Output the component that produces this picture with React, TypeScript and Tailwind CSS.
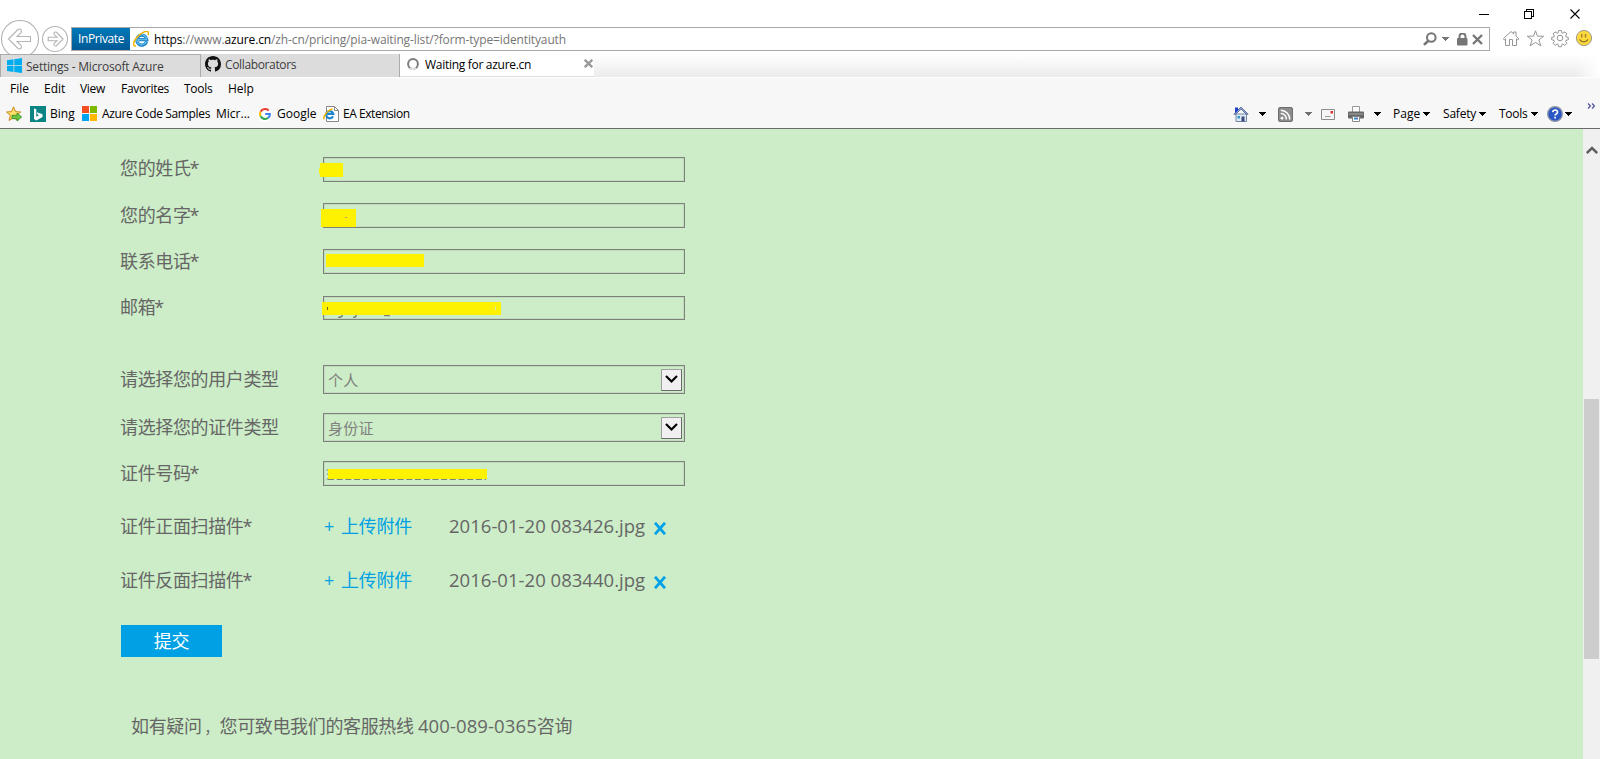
import type { ReactNode } from "react";

const cjk = "font-['Open_Sans','Noto_Sans_CJK_SC',sans-serif] font-normal text-[18px] leading-[24px] tracking-[-0.36px] whitespace-pre";

function Caret({ className = "text-black" }: { className?: string }) {
  return (
    <svg width="7" height="4" viewBox="0 0 7 4" className={`shrink-0 ${className}`} shapeRendering="crispEdges">
      <path d="M0 0h7L3.5 4z" fill="currentColor" />
    </svg>
  );
}

function EdgeE({ size, className = "" }: { size: number; className?: string }) {
  return (
    <svg width={size} height={size} viewBox="0 0 16 16" className={`shrink-0 ${className}`}>
      <path d="M13.6 10.6A5 5 0 1 1 13.8 8.6H6" fill="none" stroke="#1a80c4" strokeWidth="3.2" />
      <path d="M13.2 10.6A5 5 0 1 1 13.6 8.4H6" fill="none" stroke="#5cb8ec" strokeWidth="1.5" />
      <path d="M3 15C-.6 15.6 0 11 3.6 6.800C7.500 2 13.500-.9 15.200 1c.7.9.4 2-.2 3.200" fill="none" stroke="#f0b400" strokeWidth="1.5" />
    </svg>
  );
}

function NavButtons() {
  return (
    <svg width="71" height="34" viewBox="0 20 71 34" className="shrink-0" fill="none" stroke="#b4b4b4" strokeWidth="1.1">
      <circle cx="20" cy="39" r="18.500" fill="#fff" />
      <circle cx="55" cy="39" r="12.500" fill="#fff" />
      <path d="M8.500 39 18 29.500q2-1.200 3.200.6.700 1.400-.4 2.700L17 36.500h13.500v5H17l3.800 3.700q1.100 1.300.4 2.700-1.200 1.800-3.200.6z" />
      <path d="M63 39 56.500 32.300q-1.600-.8-2.500.5-.4 1 .3 1.800l2.700 2.600h-8.800v3.600H57l-2.700 2.600q-.7.8-.3 1.800.9 1.300 2.500.5z" />
    </svg>
  );
}

function WindowControls() {
  return (
    <div className="flex h-5 justify-end pr-[9px]">
      <svg width="112" height="20" viewBox="1479 0 112 20" fill="none" stroke="#000">
        <path d="M1479 14.500h10M1524.500 11.500h7v7h-7zM1526.500 11.500v-2h7v7h-2" shapeRendering="crispEdges" />
        <path d="M1570.500 9.500l9 9M1579.500 9.500l-9 9" strokeWidth="1.100" />
      </svg>
    </div>
  );
}

function AddressBar() {
  return (
    <div className="mt-[7px] flex h-[24px] w-[1419px] shrink-0 items-center border border-[#a9a9a9] bg-white">
      <div className="flex h-[22px] w-[58px] items-center bg-gradient-to-b from-[#0078b8] to-[#005a96] pl-[6px] font-['Open_Sans',sans-serif] text-[12px] leading-[16px] tracking-[-0.39px] text-white">
        InPrivate
      </div>
      <EdgeE size={16} className="ml-[3px]" />
      <div className="ml-[5px] mt-[2px] flex-1 whitespace-pre font-['Open_Sans',sans-serif] text-[12px] leading-[16px] tracking-[-0.124px] text-[#767676]">
        <span className="text-black">https</span>://www.<span className="text-black">azure.cn</span>/zh-cn/pricing/pia-waiting-list/?form-type=identityauth
      </div>
      <div className="flex items-center pr-[5px] text-[#767676]">
        <svg width="14" height="14" viewBox="0 0 14 14" fill="none" stroke="currentColor" strokeWidth="2">
          <circle cx="8.300" cy="5.500" r="4.300" />
          <path d="M5.300 8.700 1 12.900" strokeWidth="2.600" />
        </svg>
        <Caret className="ml-[5px] text-[#767676]" />
        <svg width="11" height="13" viewBox="0 0 11 13" className="ml-2 mr-px" fill="none" stroke="currentColor">
          <path d="M2.500 6V3.500a3 3 0 0 1 6 0V6" strokeWidth="2" />
          <path d="M.5 5.500h9.500V12H.5z" fill="currentColor" />
        </svg>
        <svg width="11" height="11" viewBox="0 0 11 11" className="ml-[3px] mr-px" stroke="currentColor" strokeWidth="2.400">
          <path d="M1 1l9 9M10 1l-9 9" />
        </svg>
      </div>
    </div>
  );
}

function BrowserIcons() {
  return (
    <svg width="110" height="34" viewBox="1490 20 110 34" className="shrink-0" fill="none" stroke="#969696">
      <path d="M1503.500 38.500 1511 31.500l2.500 2.300V32h2.500v4.200l2.800 2.600-1 1.200-1.300-1.100v6.600h-4v-6h-3v6h-4v-6.600l-1.200 1.100z" />
      <path d="M1535.500 30.800l2 5.400h6.200l-4.800 3.700 2 6-5.400-3.500-5.400 3.500 2-6-4.800-3.700h6.200z" />
      <circle cx="1560" cy="38" r="2.800" />
      <path d="M1558.600 30.500h2.800l.5 2.300 1 .4 2-1.300 2 2-1.300 2 .4 1 2.300.5v2.400l-2.300.5-.4 1 1.300 2-2 2-2-1.300-1 .4-.5 2.300h-2.800l-.5-2.300-1-.4-2 1.300-2-2 1.300-2-.4-1-2.300-.5v-2.400l2.300-.5.4-1-1.300-2 2-2 2 1.300 1-.4z" strokeLinejoin="round" />
      <circle cx="1584" cy="38" r="7.600" fill="#ffd93b" stroke="#9a9a8c" />
      <path d="M1581.700 34v3.500M1585.500 34v3.500" stroke="#a08530" strokeWidth="1.500" />
      <path d="M1579.500 39.500q4.300 4.800 8.600 0" stroke="#8f7728" strokeWidth="1.200" />
    </svg>
  );
}

function Tabs() {
  const base = "font-['Open_Sans',sans-serif] text-[12px] leading-[16px] whitespace-pre";
  return (
    <div className="flex h-[23px]">
      <div className="flex w-[200px] border-l border-t border-[#ababab] bg-[#dcdcdc] pl-[6px] pt-[3px] text-[#3c3c3c]">
        <svg width="15" height="15" viewBox="0 0 15 15" fill="#00adef" className="shrink-0">
          <path d="M0 2.200 6.500 1.300v5.900H0zM7.300 1.200 15 .1v7.100H7.300zM0 8h6.500v5.900L0 13zM7.300 8H15v7l-7.700-1.100z" />
        </svg>
        <span className={`${base} ml-[4px] mt-px tracking-[-0.21px]`}>Settings - Microsoft Azure</span>
      </div>
      <div className="flex w-[200px] border-l border-r border-r-[#ababab] border-l-[#ababab] bg-[#dcdcdc] pl-1 pt-[2px] text-[#3c3c3c]">
        <svg width="16" height="16" viewBox="0 0 16 16" fill="#111" className="shrink-0">
          <path d="M8 0C3.580 0 0 3.580 0 8c0 3.540 2.290 6.530 5.470 7.590.4.070.550-.170.550-.380 0-.190-.010-.820-.010-1.490-2.010.370-2.530-.490-2.690-.940-.090-.230-.480-.940-.820-1.130-.280-.150-.680-.520-.010-.530.630-.010 1.080.580 1.230.820.720 1.210 1.870.870 2.330.660.070-.520.280-.870.510-1.070-1.780-.200-3.640-.890-3.640-3.950 0-.870.310-1.590.820-2.150-.080-.200-.360-1.020.080-2.120 0 0 .670-.210 2.200.820.640-.180 1.320-.270 2-.270s1.360.090 2 .270c1.530-1.040 2.200-.820 2.200-.820.440 1.100.160 1.920.080 2.120.510.560.820 1.270.820 2.150 0 3.070-1.870 3.750-3.650 3.950.290.250.540.730.540 1.480 0 1.070-.010 1.930-.010 2.200 0 .210.150.460.550.380A8.010 8.010 0 0 0 16 8c0-4.420-3.580-8-8-8z" />
        </svg>
        <span className={`${base} ml-1 mt-px tracking-[-0.36px]`}>Collaborators</span>
      </div>
      <div className="flex w-[194px] border-b border-[#dcdcdc] bg-white pl-[7px] pt-[2px] text-black">
        <svg width="12" height="12" viewBox="0 0 12 12" fill="none" strokeWidth="2" className="mt-[2px] shrink-0">
          <circle cx="6" cy="6" r="4.900" stroke="#7c7c7c" />
          <path d="M3 10A5 5 0 0 0 9 10" stroke="#dedede" />
        </svg>
        <span className={`${base} ml-[6px] mt-px tracking-[-0.29px]`}>Waiting for azure.cn</span>
        <svg width="9" height="9" viewBox="0 0 9 9" stroke="#999" strokeWidth="2.300" className="ml-auto mr-px mt-[3px] shrink-0">
          <path d="M.7.7l7.600 7.600M8.300.7.700 8.300" />
        </svg>
      </div>
      <div className="flex flex-1 bg-gradient-to-b from-white to-[#ececec]">
        <div className="ml-auto w-[24px] bg-gradient-to-r from-transparent to-white" />
      </div>
    </div>
  );
}

const item = "font-['Open_Sans',sans-serif] text-[12px] leading-[16px] whitespace-pre text-black";

function MenuBar() {
  return (
    <div className="flex h-[22px] items-center">
      <span className={`${item} w-[34px] ml-[10px]`}>File</span>
      <span className={`${item} w-[36px]`}>Edit</span>
      <span className={`${item} w-[41px] tracking-[-0.3px]`}>View</span>
      <span className={`${item} w-[63px] tracking-[-0.3px]`}>Favorites</span>
      <span className={`${item} w-[44px] tracking-[-0.3px]`}>Tools</span>
      <span className={item}>Help</span>
    </div>
  );
}

function FavoritesBar() {
  return (
    <div className="flex h-[28px] items-center">
      <svg width="16" height="16" viewBox="0 0 16 16" className="ml-[6px] shrink-0">
        <path d="M7.500.8l2 4.800 5.200.4-4 3.400 1.300 5.100-4.500-2.800L3 14.500l1.300-5.100L.5 6l5-.4z" fill="#ffdf6b" stroke="#c98a1c" />
        <path d="M6 9.300h5V7l4.700 4-4.700 4v-2.300H6z" fill="#6cc644" stroke="#2e8a1c" strokeWidth=".8" />
      </svg>
      <svg width="16" height="16" viewBox="0 0 16 16" className="ml-2 shrink-0">
        <path d="M0 0h16v16H0z" fill="#0c8484" />
        <path d="M4 2.500l2.300.8v7.400l2.700-1.500-1.400-.7-.8-2.200 5.700 2v2.600l-6.200 3.500L4 13z" fill="#fff" />
      </svg>
      <span className={`${item} ml-1 w-[32px]`}>Bing</span>
      <div className="mb-px grid shrink-0 grid-cols-[7px_7px] grid-rows-[7px_7px] gap-px">
        <i className="bg-[#f25022]" /><i className="bg-[#7fba00]" /><i className="bg-[#00a4ef]" /><i className="bg-[#ffb900]" />
      </div>
      <span className={`${item} ml-[5px] w-[114px] tracking-[-0.36px]`}>Azure Code Samples</span>
      <span className={`${item} w-[42px]`}>Micr...</span>
      <span className="-ml-px flex size-[15px] shrink-0 items-center justify-center rounded-full bg-white">
        <svg width="12" height="12" viewBox="0 0 12 12" fill="none" strokeWidth="2.100">
          <path d="M9.700 2.600A5 5 0 0 0 1.600 3.700" stroke="#ea4335" />
          <path d="M1.600 3.700a5 5 0 0 0 0 4.600" stroke="#fbbc05" />
          <path d="M1.600 8.300A5 5 0 0 0 9.300 9.700" stroke="#34a853" />
          <path d="M9.300 9.700A4.800 4.800 0 0 0 10.900 6H6.200" stroke="#4285f4" />
        </svg>
      </span>
      <span className={`${item} ml-[5px] w-[46px]`}>Google</span>
      <svg width="17" height="16" viewBox="0 0 17 16" className="shrink-0">
        <path d="M3.500.5h8l4 4v11h-12z" fill="#fff" stroke="#888" />
        <path d="M11.500.5v4h4" fill="none" stroke="#888" />
        <path d="M10 10.300A3.600 3.600 0 1 1 10.300 8H4" fill="none" stroke="#1c84d0" strokeWidth="2.200" />
        <path d="M1.500 13C-.5 12 3 5 9.500 2.700" fill="none" stroke="#f0b400" strokeWidth="1.600" />
      </svg>
      <span className={`${item} ml-[3px] tracking-[-0.45px]`}>EA Extension</span>

      <div className="ml-auto flex items-center">
        <svg width="16" height="17" viewBox="0 0 16 17">
          <path d="M3 8h10.500v7.500H3z" fill="#dfe8f5" stroke="#7688a8" />
          <path d="M8 1 .8 8.200h2L8 3l5.200 5.200h2z" fill="#8fa6d0" stroke="#4a5f96" strokeWidth=".8" />
          <path d="M2 1.500h3v3l-3 2.800z" fill="#2440c8" />
          <path d="M8.500 10.500h3v5h-3z" fill="#3a4a78" />
          <path d="M4.500 10h2.500v2.500H4.500z" fill="#2a9ac8" />
        </svg>
        <Caret className="ml-[10px]" />
        <svg width="15" height="15" viewBox="0 0 15 15" className="ml-3 mt-px">
          <rect x=".5" y=".5" width="14" height="14" rx="1.500" fill="#8c8c8c" stroke="#6e6e6e" />
          <circle cx="4" cy="11.200" r="1.400" fill="#fff" />
          <path d="M2.800 6.600a5.400 5.400 0 0 1 5.500 5.900M2.800 3.200a9 9 0 0 1 8.900 9.300" fill="none" stroke="#fff" strokeWidth="1.500" />
        </svg>
        <Caret className="ml-3 text-[#707070]" />
        <svg width="14" height="11" viewBox="0 0 14 11" className="ml-[9px]">
          <path d="M.5.5h13v10H.5z" fill="#f6f6f6" stroke="#8c8c8c" />
          <path d="M9.500 2h2.500v2.500H9.500z" fill="#e03030" />
          <path d="M4 7.500h5.500" stroke="#999" />
        </svg>
        <svg width="16" height="16" viewBox="0 0 16 16" className="ml-[13px]">
          <path d="M4.500.5h7v6h-7z" fill="#fff" stroke="#999" />
          <rect x="0" y="5.500" width="16" height="7" rx="1" fill="#666" />
          <path d="M1 8h14" stroke="#b0b0b0" />
          <path d="M4.500 10.500h7v5h-7z" fill="#fff" stroke="#888" />
          <path d="M6 11.500h2v2H6z" fill="#1c9ac8" /><path d="M8 11.500h2v2H8z" fill="#5a6ad0" />
        </svg>
        <Caret className="ml-[10px]" />
        <span className={`${item} ml-[12px] w-[30px]`}>Page</span>
        <Caret />
        <span className={`${item} ml-[13px] w-[36px] tracking-[-0.2px]`}>Safety</span>
        <Caret />
        <span className={`${item} ml-[13px] w-[32px] tracking-[-0.3px]`}>Tools</span>
        <Caret />
        <svg width="16" height="16" viewBox="0 0 16 16" className="ml-[9px]">
          <circle cx="8" cy="8" r="7.300" fill="#2a56c6" stroke="#8a93a8" strokeWidth="1.400" />
          <path d="M5.700 6.200Q6 4 8.200 4q2.300.1 2.300 2 0 1.200-1.300 1.900-1.100.6-1.100 1.700M8.100 10.800v1.800" fill="none" stroke="#fff" strokeWidth="1.700" />
        </svg>
        <Caret className="ml-[2px]" />
        <svg width="9" height="6" viewBox="0 0 9 6" className="-mt-[17px] ml-[15px] mr-[4px]" fill="none" stroke="#4a4a9c" strokeWidth="1.100">
          <path d="M1 .5 3.500 3 1 5.500M5 .5 7.500 3 5 5.500" />
        </svg>
      </div>
    </div>
  );
}

function Row({ label, className, labelClass = "", children }: { label: string; className: string; labelClass?: string; children: ReactNode }) {
  return (
    <div className={`flex items-center ${className}`}>
      <span className={`${cjk} w-[203px] shrink-0 text-[#666] ${labelClass}`}>
        {label.replace("*", "")}
        {label.endsWith("*") && <span className="-ml-px">*</span>}
      </span>
      {children}
    </div>
  );
}

function Field({ children }: { children?: ReactNode }) {
  return (
    <div className="relative h-full w-[362px] border border-[#7c8279] shadow-[inset_0_0_0_1px_#c0dcbc]">
      {children}
    </div>
  );
}

function Select({ value }: { value: string }) {
  return (
    <div className="flex h-full w-[362px] items-center justify-between border border-[#7f7f7f] pl-[5px] pr-[2px] shadow-[inset_0_0_0_1px_#c0dcbc]">
      <span className="-ml-px whitespace-pre font-['Noto_Sans_CJK_SC',sans-serif] text-[15px] leading-[20px] tracking-[0.2px] text-[#808080]">{value}</span>
      <span className="flex h-[22px] w-[21px] items-center justify-center border border-b-[#6a6a6a] border-l-[#a0a0a0] border-r-[#6a6a6a] border-t-[#a0a0a0] bg-[#f0f0f0]">
        <svg width="13" height="9" viewBox="0 0 13 9" fill="none" stroke="#000" strokeWidth="2.200">
          <path d="M1 1 6.500 6.500 12 1" />
        </svg>
      </span>
    </div>
  );
}

function Upload({ file }: { file: string }) {
  return (
    <>
      <span className={`${cjk} -mt-[2px] w-[126px] pl-px text-[#00a1e4]`}>+<span className="ml-[7px] tracking-[-0.2px]">上传附件</span></span>
      <span className="-mt-[2px] w-[205px] whitespace-pre font-['Open_Sans',sans-serif] text-[18.5px] leading-[24px] tracking-[0.02px] text-[#666]">{file}</span>
      <svg width="12" height="13" viewBox="0 0 12 13" className="mt-[3px]" stroke="#00a1e8" strokeWidth="2.800">
        <path d="M1 .8l10 11.400M11 .8 1 12.200" />
      </svg>
    </>
  );
}

function Form() {
  return (
    <div className="flex flex-1 flex-col items-start bg-[#ccedc7] pl-[120px] pt-7">
      <Row label="您的姓氏*" className="h-[25px]" labelClass="-mt-[3px]">
        <Field>
          <div className="absolute -left-[5px] top-[9px] h-[8px] w-[3px] rounded-l bg-[#fff200]" />
          <div className="absolute -left-[4px] top-[5px] h-[14px] w-[23px] bg-[#fff200]" />
        </Field>
      </Row>
      <Row label="您的名字*" className="mt-[21px] h-[25px]" labelClass="-mt-px">
        <Field>
          <div className="absolute -left-[3px] top-[5px] flex h-[18px] w-[35px] bg-[#fff200]">
            <i className="ml-6 mt-2 h-px w-[2px] bg-[#b0a850]" />
          </div>
        </Field>
      </Row>
      <Row label="联系电话*" className="mt-[21px] h-[25px]" labelClass="-mt-px">
        <Field><div className="absolute left-[2px] top-1 h-[13px] w-[98px] bg-[#fff200]" /></Field>
      </Row>
      <Row label="邮箱*" className="mt-[22px] h-[24px]" labelClass="-mt-[2px]">
        <Field>
          <svg width="180" height="17" viewBox="322 302 180 17" className="absolute -left-[2px] top-[5px]">
            <path d="M342.500 315q-.5 2.500-4.500 2.300M356.500 315q-.5 2.500-3.500 2.300M384 315.500h6" fill="none" stroke="#7c8279" strokeWidth="1.300" />
            <path d="M322 302h179v13H322z" fill="#fff200" />
            <path d="M327.500 307v3" stroke="#6b6b20" /><path d="M495.500 307v3" stroke="#d8edb0" />
          </svg>
        </Field>
      </Row>
      <Row label="请选择您的用户类型" className="mt-[45px] h-[29px]" labelClass="-mt-px"><Select value="个人" /></Row>
      <Row label="请选择您的证件类型" className="mt-[19px] h-[29px]" labelClass="-mt-[2px]"><Select value="身份证" /></Row>
      <Row label="证件号码*" className="mt-[19px] h-[25px]" labelClass="-mt-[2px]">
        <Field>
          <svg width="162" height="12" viewBox="326 469 162 12" className="absolute left-[2px] top-[7px]">
            <path d="M328 479.500H486" stroke="#7c8279" strokeDasharray="6 2.700" />
            <path d="M326.500 470h2M327 474h1M326.500 479h2" stroke="#7c8279" />
            <path d="M328 469h159v10H328z" fill="#fff200" />
          </svg>
        </Field>
      </Row>
      <Row label="证件正面扫描件*" className="mt-[29px] h-[24px]" labelClass="-mt-[2px]"><Upload file="2016-01-20 083426.jpg" /></Row>
      <Row label="证件反面扫描件*" className="mt-[30px] h-[24px]" labelClass="-mt-[2px]"><Upload file="2016-01-20 083440.jpg" /></Row>
      <button className={`${cjk} ml-px mt-[32px] flex h-8 w-[101px] items-center justify-center bg-[#00a1e4] text-white`}>提交</button>
      <p className={`${cjk} ml-[11px] mt-[57px] text-[#666]`}>
        如有疑问<span className="inline-block w-[18px] indent-[3px] text-[14px] tracking-normal">，</span>您可致电我们的客服热线 <span className="text-[18.5px] tracking-[0.1px]">400-089-0365</span>咨询
      </p>
    </div>
  );
}

export default function App() {
  return (
    <div className="flex h-[759px] w-[1600px] flex-col overflow-hidden bg-white">
      <WindowControls />
      <div className="flex h-[34px] shrink-0">
        <NavButtons />
        <AddressBar />
        <BrowserIcons />
      </div>
      <Tabs />
      <div className="mt-px h-[51px] shrink-0 border-b border-[#6b6b6b] bg-[#f7f7f7]">
        <MenuBar />
        <FavoritesBar />
      </div>
      <div className="flex flex-1">
        <Form />
        <div className="flex w-[17px] flex-col items-center bg-[#f0f0f0]">
          <svg width="12" height="8" viewBox="0 0 12 8" className="mt-[17px]" fill="none" stroke="#606060" strokeWidth="2.600">
            <path d="M.8 7 6 2l5.200 5" />
          </svg>
          <div className="mt-[245px] h-[260px] w-[15px] bg-[#cdcdcd]" />
        </div>
      </div>
    </div>
  );
}
